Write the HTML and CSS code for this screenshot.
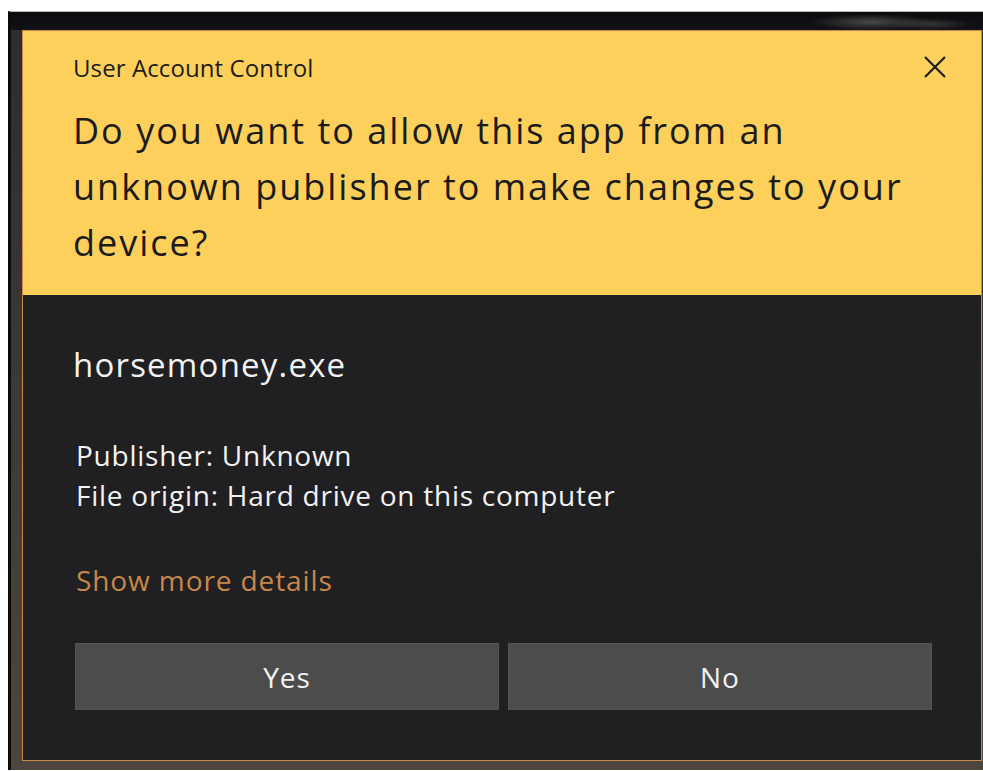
FILE: index.html
```html
<!DOCTYPE html>
<html lang="en">
<head>
<meta charset="utf-8">
<title>User Account Control</title>
<link rel="stylesheet" href="styles.css">
</head>
<body>
<div class="desktop">
  <div class="dialog">
    <div class="header">
      <div class="caption-row">
        <span class="caption">User Account Control</span>
        <button class="close" aria-label="Close">
          <svg width="22" height="22" viewBox="0 0 22 22"><path d="M1 1L21 21M21 1L1 21" stroke="#1e1e1e" stroke-width="2.2" fill="none"/></svg>
        </button>
      </div>
      <h1 class="question">Do you want to allow this app from an unknown publisher to make changes to your device?</h1>
    </div>
    <div class="content">
      <div class="app-name">horsemoney.exe</div>
      <div class="info">
        <div>Publisher: Unknown</div>
        <div>File origin: Hard drive on this computer</div>
      </div>
      <a class="details" href="#">Show more details</a>
      <div class="actions">
        <button class="btn">Yes</button>
        <button class="btn">No</button>
      </div>
    </div>
  </div>
</div>
</body>
</html>
```
FILE: styles.css
```css
html, body {
  margin: 0;
  height: 100%;
  background: #ffffff;
  overflow: hidden;
}

body {
  font-family: "Open Sans", "Noto Sans", sans-serif;
}

/* dark wallpaper strip framing the dialog */
.desktop {
  margin: 11px 0 0 8px;
  border-top: 1px solid #b8b8b8;
  border-left: 3px solid #0b0b0c;
  padding: 18px 0 0 11px;
  height: calc(100% - 12px);
  box-sizing: border-box;
  overflow: hidden;
  background:
    radial-gradient(ellipse 60px 8px at 860px 10px, rgba(120,120,120,0.55), transparent),
    radial-gradient(ellipse 40px 6px at 920px 12px, rgba(90,90,90,0.5), transparent),
    linear-gradient(to bottom, #0c0c0f 0, #121216 18px, transparent 18px),
    linear-gradient(to bottom, #2e2b29, #4d463e);
}

.dialog {
  width: 958px;
  border: 1px solid #c6884d;
  background: #201f21;
}

.header {
  background: #fdd05b;
  padding: 20px 0 0 50px;
  height: 264px;
  box-sizing: border-box;
}

.caption-row {
  display: flex;
  justify-content: space-between;
  align-items: center;
  height: 32px;
  padding-right: 35px;
}

.caption {
  font-size: 24px;
  color: #1c1c1c;
  letter-spacing: 0.1px;
}

.close {
  border: 0;
  background: transparent;
  padding: 0;
  width: 22px;
  height: 22px;
}

.question {
  margin: 20px 0 0;
  max-width: 860px;
  font-weight: 400;
  font-size: 36px;
  line-height: 56px;
  color: #1b1b1b;
  letter-spacing: 2px;
}

.content {
  height: 465px;
  box-sizing: border-box;
  padding: 48px 50px 0 50px;
  color: #f2f2f2;
}

.app-name {
  font-size: 33px;
  line-height: 44px;
  letter-spacing: 1.2px;
}

.info {
  margin-top: 48px;
  font-size: 28px;
  line-height: 40px;
  letter-spacing: 0.75px;
  padding-left: 3px;
}

.details {
  display: block;
  margin-top: 45px;
  font-size: 28px;
  line-height: 40px;
  letter-spacing: 0.9px;
  color: #c8874a;
  text-decoration: none;
  padding-left: 3px;
}

.actions {
  display: flex;
  gap: 9px;
  margin-top: 43px;
  padding-left: 2px;
}

.btn {
  flex: 0 0 424px;
  height: 67px;
  background: #4c4c4c;
  border: 1px solid #555555;
  color: #f2f2f2;
  font-family: inherit;
  font-size: 28px;
  letter-spacing: 1px;
  padding: 0;
}
```
